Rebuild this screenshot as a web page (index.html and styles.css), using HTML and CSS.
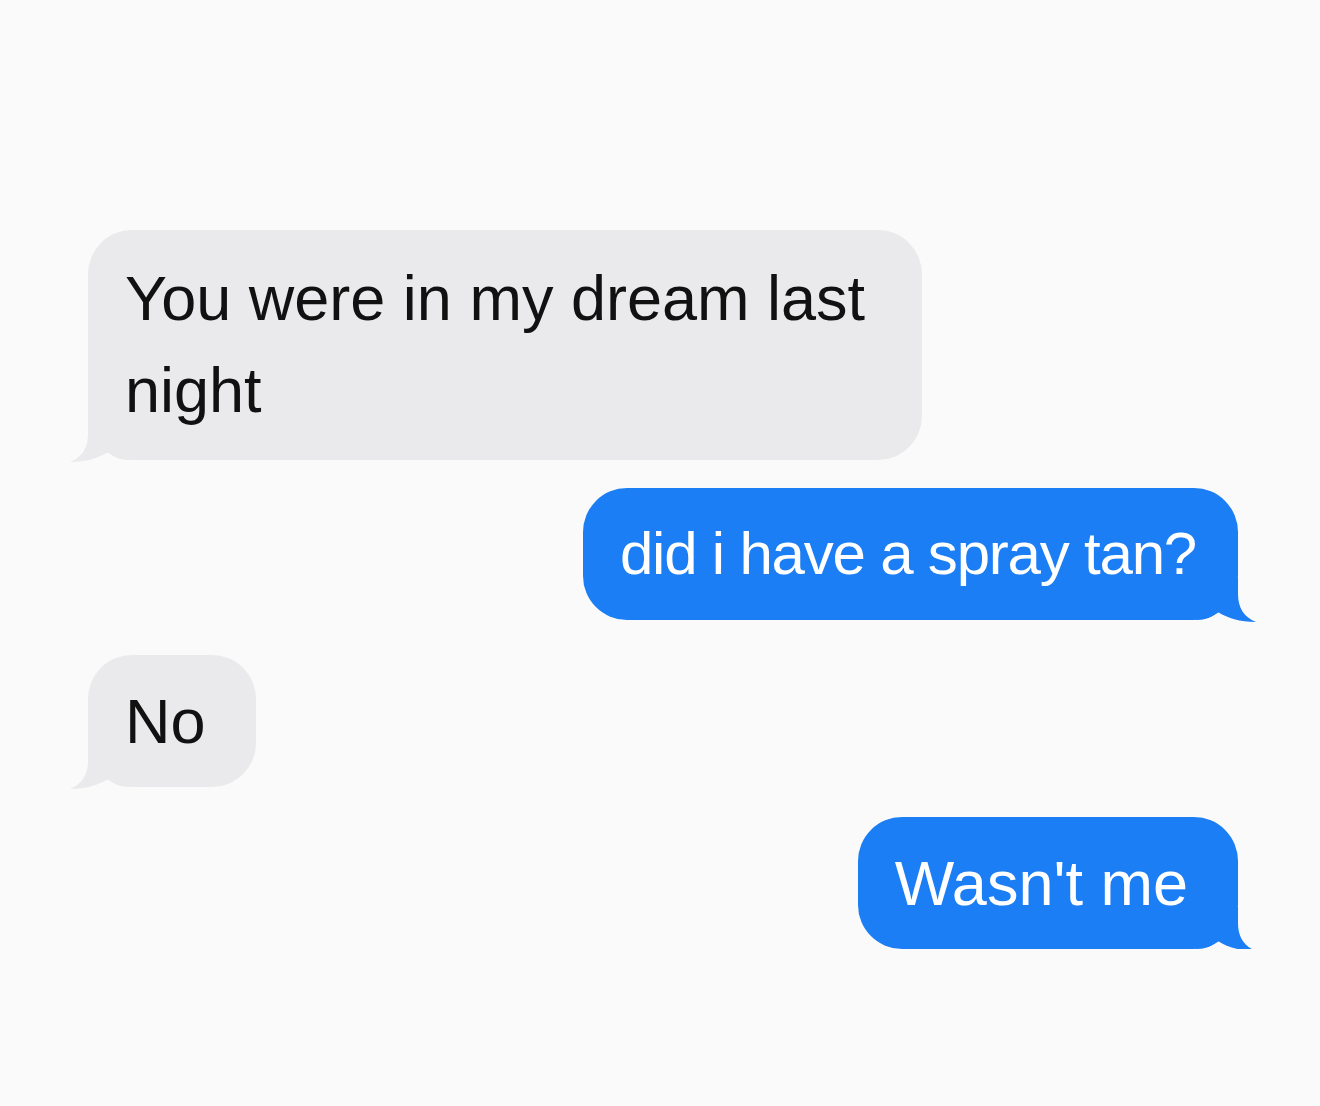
FILE: index.html
```html
<!DOCTYPE html>
<html lang="en">

<head>
    <meta charset="UTF-8">
    <meta name="viewport" content="width=device-width, initial-scale=1.0">
    <title>Messages</title>
    <link rel="stylesheet" href="styles.css">
</head>

<body>
    <div class="thread">
        <div class="bubble them first">
            You were in my dream last night
            <svg class="tail" viewBox="0 0 60 44"><path d="M18 0 L18 16 C18 30 12 39 0 44 C16 44 29 40 38 34 C44 39 50 42 60 42 L60 0 Z" /></svg>
        </div>
        <div class="bubble me spray">
            did i have a spray tan?
            <svg class="tail" viewBox="0 0 60 44"><path d="M18 0 L18 16 C18 30 12 39 0 44 C16 44 29 40 38 34 C44 39 50 42 60 42 L60 0 Z" /></svg>
        </div>
        <div class="bubble them no">
            No
            <svg class="tail" viewBox="0 0 60 44"><path d="M18 0 L18 16 C18 30 12 39 0 44 C16 44 29 40 38 34 C44 39 50 42 60 42 L60 0 Z" /></svg>
        </div>
        <div class="bubble me last">
            Wasn't me
            <svg class="tail" viewBox="0 0 60 44"><path d="M18 0 L18 16 C18 30 12 39 0 44 C16 44 29 40 38 34 C44 39 50 42 60 42 L60 0 Z" /></svg>
        </div>
    </div>
</body>

</html>
```

FILE: styles.css
```css
body {
    margin: 0;
    padding: 0;
    background: #fafafa;
    font-family: "Liberation Sans", Arial, Helvetica, sans-serif;
}

.thread {
    display: flex;
    flex-direction: column;
    padding: 230px 82px 0 88px;
}

.bubble {
    position: relative;
    box-sizing: border-box;
    font-size: 63px;
    line-height: 92px;
    padding: 20px 50px 20px 37px;
    border-radius: 44px;
}

/* little curl under the bottom corner */
.bubble .tail {
    position: absolute;
    bottom: -2px;
    width: 60px;
    height: 44px;
}

.them {
    align-self: flex-start;
    background: #eaeaec;
    color: #111;
}

.them .tail {
    left: -18px;
    fill: #eaeaec;
}

.me {
    align-self: flex-end;
    background: #1b7ef4;
    color: #fff;
}

.me .tail {
    right: -18px;
    fill: #1b7ef4;
    transform: scaleX(-1);
}

.first {
    max-width: 834px;
    padding-top: 22px;
    padding-bottom: 24px;
}

.spray {
    margin-top: 28px;
    padding-right: 42px;
    font-size: 60px;
    letter-spacing: -1.2px;
}

.no {
    margin-top: 35px;
}

.last {
    margin-top: 30px;
}
```
